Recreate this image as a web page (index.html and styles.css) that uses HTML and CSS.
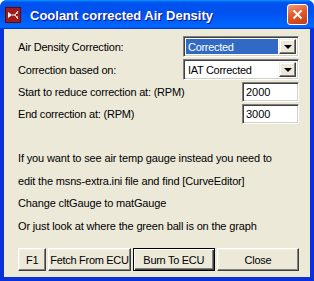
FILE: index.html
```html
<!DOCTYPE html>
<html lang="en">

<head>
    <title>Coolant corrected Air Density</title>

    <link rel="stylesheet" href="styles.css">
</head>

<body>
    <div class="window">
        <div class="titlebar">
            <svg class="titlebar__icon" width="16" height="16" viewBox="0 0 16 16">
                <rect x="0.5" y="0.5" width="15" height="15" fill="#9c1c1c" stroke="#5a0a0a" />
                <path d="M3 5 L7 8 L3 11 Z" fill="#fff" />
                <path d="M7 8 H10 M10 8 L13 4 M10 8 L13 12 M11 6 H13 M11 10 H13" stroke="#fff" stroke-width="1" fill="none" />
            </svg>
            <span class="titlebar__text">Coolant corrected Air Density</span>
            <div class="titlebar__close">
                <svg width="11" height="11" viewBox="0 0 11 11">
                    <path d="M1.5 1.5 L9.5 9.5 M9.5 1.5 L1.5 9.5" stroke="#fff" stroke-width="2" />
                </svg>
            </div>
        </div>

        <div class="content">
            <div class="form">
                <label class="form__label">Air Density Correction:</label>
                <div class="combo combo--selected">
                    <span class="combo__value">Corrected</span>
                    <span class="combo__button"><i class="arrow"></i></span>
                </div>

                <label class="form__label">Correction based on:</label>
                <div class="combo">
                    <span class="combo__value">IAT Corrected</span>
                    <span class="combo__button"><i class="arrow"></i></span>
                </div>

                <label class="form__label">Start to reduce correction at: (RPM)</label>
                <div class="field">2000</div>

                <label class="form__label">End correction at: (RPM)</label>
                <div class="field">3000</div>
            </div>

            <div class="notes">
                <div class="notes__line">If you want to see air temp gauge instead you need to</div>
                <div class="notes__line">edit the msns-extra.ini file and find [CurveEditor]</div>
                <div class="notes__line">Change cltGauge to matGauge</div>
                <div class="notes__line">Or just look at where the green ball is on the graph</div>
            </div>

            <div class="buttons">
                <button class="btn btn--small">F1</button>
                <button class="btn">Fetch From ECU</button>
                <button class="btn btn--default">Burn To ECU</button>
                <button class="btn">Close</button>
            </div>
        </div>
    </div>
</body>

</html>
```

FILE: styles.css
```css
* {
    padding: 0;
    margin: 0;
    box-sizing: border-box;
}

body {
    background: #fff;
    font-family: "Liberation Sans", Arial, sans-serif;
    font-size: 11px;
    letter-spacing: -0.2px;
    color: #000;
}

.window {
    width: 314px;
    height: 281px;
    display: flex;
    flex-direction: column;
    background: #0831d9;
    border-radius: 7px 7px 0 0;
    overflow: hidden;
}

.titlebar {
    height: 29px;
    flex: none;
    display: flex;
    align-items: center;
    padding: 0 6px 0 5px;
    background: linear-gradient(180deg, #0997ff, #0053ee 8%, #0050ee 40%, #06f 88%, #06f 93%, #005bff 95%, #003dd7 96%, #003dd7);
}

.titlebar__icon {
    flex: none;
    margin-top: 1px;
}

.titlebar__text {
    flex: 1;
    margin-left: 9px;
    margin-top: 1px;
    color: #fff;
    font-weight: bold;
    font-size: 13px;
    letter-spacing: 0;
    text-shadow: 1px 1px #0f1089;
}

.titlebar__close {
    width: 21px;
    height: 21px;
    display: flex;
    align-items: center;
    justify-content: center;
    border: 1px solid #fff;
    border-radius: 3px;
    background: linear-gradient(160deg, #f39c7c, #e35b2c 45%, #c43b10);
}

.content {
    flex: 1;
    margin: 0 4px 4px 4px;
    background: #ece9d8;
    display: flex;
    flex-direction: column;
    padding: 7px 11px 6px 14px;
}

.form {
    display: grid;
    grid-template-columns: minmax(0, 1fr) auto;
    row-gap: 2px;
    align-items: center;
}

.form__label {
    white-space: nowrap;
}

.combo {
    width: 116px;
    height: 21px;
    justify-self: end;
    display: flex;
    align-items: center;
    background: #fff;
    border: 1px solid;
    border-color: #808080 #fff #fff #808080;
    box-shadow: inset 1px 1px #404040, inset -1px -1px #d4d0c8;
    padding: 2px;
}

.combo__value {
    flex: 1;
    height: 100%;
    display: flex;
    align-items: center;
    padding-left: 2px;
    letter-spacing: -0.3px;
}

.combo--selected .combo__value {
    background: #316ac5;
    color: #fff;
}

.combo__button {
    width: 17px;
    height: 100%;
    margin-left: 1px;
    display: flex;
    align-items: center;
    justify-content: center;
    background: #ece9d8;
    border: 1px solid;
    border-color: #f1efe2 #404040 #404040 #f1efe2;
    box-shadow: inset -1px -1px #808080, inset 1px 1px #fff;
}

.arrow {
    width: 0;
    height: 0;
    border-left: 4px solid transparent;
    border-right: 4px solid transparent;
    border-top: 4px solid #000;
}

.field {
    width: 57px;
    height: 20px;
    justify-self: end;
    background: #fff;
    border: 1px solid;
    border-color: #808080 #fff #fff #808080;
    box-shadow: inset 1px 1px #404040, inset -1px -1px #d4d0c8;
    padding: 3px 0 0 3px;
    letter-spacing: 0;
}

.notes {
    margin-top: 28px;
}

.notes__line {
    height: 22.7px;
    white-space: nowrap;
    letter-spacing: -0.15px;
}

.buttons {
    margin-top: auto;
    display: flex;
    gap: 2px;
}

.btn {
    width: 84px;
    height: 23px;
    padding: 0;
    white-space: nowrap;
    font-family: inherit;
    font-size: 11px;
    letter-spacing: -0.3px;
    color: #000;
    background: #ece9d8;
    border: 1px solid;
    border-color: #fff #404040 #404040 #fff;
    box-shadow: inset -1px -1px #808080, inset 1px 1px #f1efe2;
}

.btn--small {
    width: 29px;
}

.btn--default {
    border: 1px solid #000;
    box-shadow: inset 1px 1px #fff, inset -1px -1px #404040, inset -2px -2px #808080;
}
```
